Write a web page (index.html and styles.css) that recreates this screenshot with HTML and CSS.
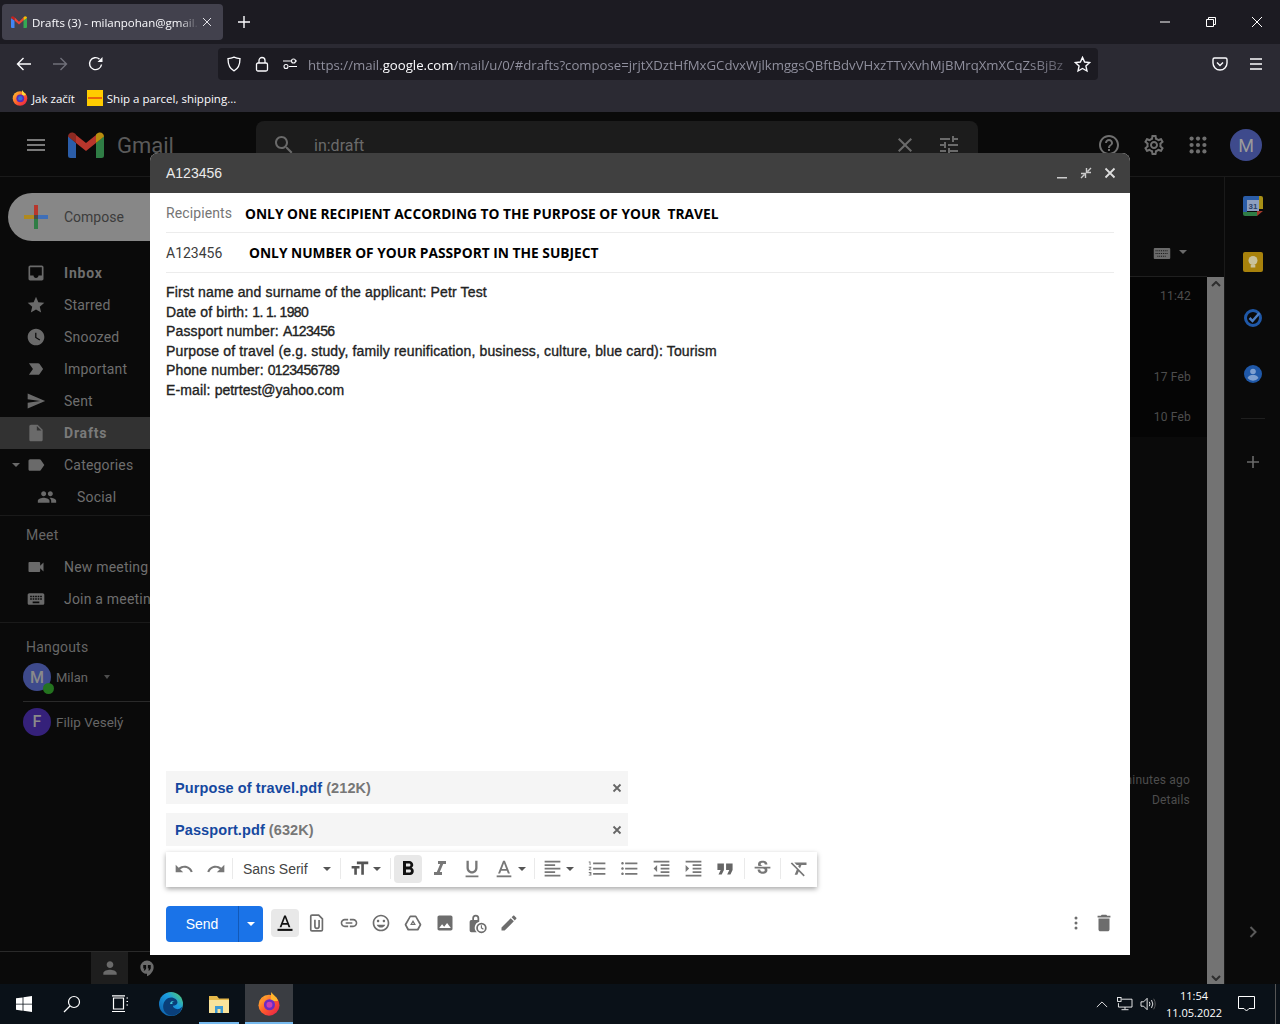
FILE: index.html
```html
<!DOCTYPE html>
<html lang="en">
<head>
<meta charset="utf-8">
<title>Drafts (3)</title>
<link rel="stylesheet" href="styles.css">
</head>
<body>
<div class="screen">
  <header class="browser">
    <div class="tabbar">
      <div class="tab">
        <svg class="favicon" viewBox="0 0 16 12"><path fill="#4285f4" d="M0 2v9a1 1 0 0 0 1 1h2.500V4.500z"/><path fill="#34a853" d="M16 2v9a1 1 0 0 1-1 1h-2.500V4.500z"/><path fill="#ea4335" d="M3.500 1.200 8 5.800l4.500-4.600v3.300L8 8.500 3.500 4.500z"/><path fill="#c5221f" d="M0 2c0-1.700 2-2.500 3.500-.8v3.300z"/><path fill="#fbbc04" d="M16 2c0-1.700-2-2.500-3.500-.8v3.300z"/></svg>
        <span class="tab-title">Drafts (3) - milanpohan@gmail.</span>
        <svg class="tab-x" viewBox="0 0 10 10"><path d="M1 1l8 8M9 1l-8 8"/></svg>
      </div>
      <svg class="newtab" viewBox="0 0 12 12"><path d="M6 0v12M0 6h12"/></svg>
      <div class="winctl">
        <svg class="wc" viewBox="0 0 46 22"><path d="M18 11h10"/></svg>
        <svg class="wc" viewBox="0 0 46 22"><path d="M18.500 8.500h7v7h-7zM20.500 8.500v-2h7v7h-2"/></svg>
        <svg class="wc" viewBox="0 0 46 22"><path d="M18 6l10 10M28 6L18 16"/></svg>
      </div>
    </div>
    <div class="navbar">
      <svg class="nav-ic ic-back" viewBox="0 0 16 16"><path d="M15 8H1.500M7.500 2L1.500 8l6 6"/></svg>
      <svg class="nav-ic ic-fwd" viewBox="0 0 16 16"><path d="M1 8h13.500M8.500 2l6 6-6 6"/></svg>
      <svg class="nav-ic ic-reload" viewBox="0 0 16 16"><path d="M13.500 8.500A6 6 0 1 1 11.500 3.100"/><path class="solid" d="M14.500 1v5h-5z"/></svg>
      <div class="urlbar">
        <svg class="url-ic" viewBox="0 0 16 16"><path d="M8 1.200c2 1 4 1.400 6 1.400 0 6-2 10.500-6 12.200C4 13.100 2 8.600 2 2.600c2 0 4-.4 6-1.400z"/></svg>
        <svg class="url-ic" viewBox="0 0 16 16"><rect x="2.500" y="7" width="11" height="8" rx="1.500"/><path d="M5 7V4.500a3 3 0 0 1 6 0V7"/></svg>
        <svg class="url-ic url-perm" viewBox="0 0 16 16"><circle cx="4" cy="10.500" r="2"/><circle cx="11.500" cy="5" r="2"/><path d="M1 5h8M14 5h1M7 10.500h8"/></svg>
        <div class="url-text">https://mail.<b>google.com</b>/mail/u/0/#drafts?compose=jrjtXDztHfMxGCdvxWjlkmggsQBftBdvVHxzTTvXvhMjBMrqXmXCqZsBjBz</div>
        <svg class="url-star" viewBox="0 0 16 16"><path d="M8 1.300l2 4.400 4.700.5-3.500 3.200 1 4.700L8 11.700l-4.200 2.400 1-4.700L1.300 6.200 6 5.700z"/></svg>
      </div>
      <svg class="nav-ic ic-pocket" viewBox="0 0 16 16"><path d="M2.500 2h11A1.500 1.500 0 0 1 15 3.500V7a7 7 0 0 1-14 0V3.500A1.500 1.500 0 0 1 2.500 2z"/><path d="M5 6.500l3 3 3-3"/></svg>
      <svg class="nav-ic ic-menu" viewBox="0 0 16 16"><path d="M2 3h12M2 8h12M2 13h12"/></svg>
    </div>
    <div class="bookmarks">
      <div class="bm">
        <svg class="bm-ic" viewBox="0 0 16 16"><defs><linearGradient id="fx1" x1="0" y1="0" x2="1" y2="1"><stop offset="0" stop-color="#ffcb2d"/><stop offset=".55" stop-color="#ff5a2c"/><stop offset="1" stop-color="#e3174e"/></linearGradient></defs><circle cx="8" cy="8.500" r="7.300" fill="url(#fx1)"/><path fill="#ffdd33" d="M10 0c1 2 3 3 4 5l-4 1z"/><circle cx="8.300" cy="8.300" r="3.900" fill="#5b2bb5"/><circle cx="8.300" cy="8.300" r="2.200" fill="#2f6fd8"/></svg>
        <span>Jak začít</span>
      </div>
      <div class="bm">
        <svg class="bm-ic" viewBox="0 0 16 16"><rect width="16" height="16" fill="#ffcc00"/><path fill="#d40511" d="M1 7.500h14v1H1z"/></svg>
        <span>Ship a parcel, shipping...</span>
      </div>
    </div>
  </header>

  <div class="gmail">
    <div class="g-head">
      <svg class="g-burger" viewBox="0 0 18 12"><path d="M0 0h18v2H0zM0 5h18v2H0zM0 10h18v2H0z"/></svg>
      <svg class="g-logo" viewBox="0 0 36 26"><path fill="#2b5da8" d="M0 4v19.500A2.500 2.500 0 0 0 2.500 26H8V11z"/><path fill="#2f7d45" d="M36 4v19.500a2.500 2.500 0 0 1-2.500 2.500H28V11z"/><path fill="#b8362c" d="M8 3l10 8 10-8v8L18 19 8 11z"/><path fill="#8d2a22" d="M0 4.500C0 .8 4.500-1.400 8 2.500V11z"/><path fill="#b98d0e" d="M36 4.500c0-3.700-4.500-5.900-8-2V11z"/></svg>
      <span class="g-word">Gmail</span>
      <div class="g-search">
        <svg class="g-sic g-mag" viewBox="0 0 24 24"><path d="M15.500 14h-.79l-.28-.27C15.410 12.590 16 11.110 16 9.500 16 5.910 13.090 3 9.500 3S3 5.910 3 9.500 5.910 16 9.500 16c1.610 0 3.090-.59 4.230-1.570l.27.28v.79l5 4.990L20.490 19l-4.990-5zm-6 0C7.010 14 5 11.990 5 9.500S7.010 5 9.500 5 14 7.010 14 9.500 11.990 14 9.500 14z"/></svg>
        <span class="g-q">in:draft</span>
        <svg class="g-sic g-clear" viewBox="0 0 24 24"><path d="M19 6.410L17.590 5 12 10.590 6.410 5 5 6.410 10.590 12 5 17.590 6.410 19 12 13.410 17.590 19 19 17.590 13.410 12z"/></svg>
        <svg class="g-sic" viewBox="0 0 24 24"><path d="M3 17v2h6v-2H3zM3 5v2h10V5H3zm10 16v-2h8v-2h-8v-2h-2v6h2zM7 9v2H3v2h4v2h2V9H7zm14 4v-2H11v2h10zm-6-4h2V7h4V5h-4V3h-2v6z"/></svg>
      </div>
      <div class="g-right">
        <svg class="g-ric" viewBox="0 0 24 24"><path d="M11 18h2v-2h-2v2zm1-16C6.480 2 2 6.480 2 12s4.480 10 10 10 10-4.480 10-10S17.520 2 12 2zm0 18c-4.410 0-8-3.590-8-8s3.590-8 8-8 8 3.590 8 8-3.590 8-8 8zm0-14c-2.210 0-4 1.790-4 4h2c0-1.100.9-2 2-2s2 .9 2 2c0 2-3 1.750-3 5h2c0-2.250 3-2.500 3-5 0-2.210-1.790-4-4-4z"/></svg>
        <svg class="g-ric g-gear" viewBox="0 0 24 24"><path d="M19.430 12.980c.04-.32.07-.64.07-.98 0-.34-.03-.66-.07-.98l2.110-1.650c.19-.15.24-.42.12-.64l-2-3.460c-.09-.16-.26-.25-.44-.25-.06 0-.12.01-.17.03l-2.490 1c-.52-.4-1.080-.73-1.690-.98l-.38-2.650C14.460 2.180 14.250 2 14 2h-4c-.25 0-.46.18-.49.42l-.38 2.650c-.61.25-1.170.59-1.690.98l-2.490-1c-.06-.02-.12-.03-.18-.03-.17 0-.34.09-.43.25l-2 3.460c-.13.22-.07.49.12.64l2.110 1.650c-.04.32-.07.65-.07.98 0 .33.03.66.07.98l-2.110 1.650c-.19.15-.24.42-.12.64l2 3.460c.09.16.26.25.44.25.06 0 .12-.01.17-.03l2.490-1c.52.4 1.080.73 1.690.98l.38 2.650c.03.24.24.42.49.42h4c.25 0 .46-.18.49-.42l.38-2.650c.61-.25 1.170-.59 1.690-.98l2.490 1c.06.02.12.03.18.03.17 0 .34-.09.43-.25l2-3.460c.12-.22.07-.49-.12-.64l-2.110-1.650zm-1.980-1.710c.04.31.05.52.05.73 0 .21-.02.43-.05.73l-.14 1.130.89.7 1.080.84-.7 1.210-1.270-.51-1.040-.42-.9.68c-.43.32-.84.56-1.250.73l-1.060.43-.16 1.130-.2 1.350h-1.400l-.19-1.350-.16-1.130-1.060-.43c-.43-.18-.83-.41-1.230-.71l-.91-.7-1.060.43-1.270.51-.7-1.210 1.080-.84.89-.7-.14-1.130c-.03-.31-.05-.54-.05-.74s.02-.43.05-.73l.14-1.130-.89-.7-1.080-.84.7-1.210 1.270.51 1.040.42.9-.68c.43-.32.84-.56 1.250-.73l1.060-.43.16-1.130.2-1.350h1.390l.19 1.350.16 1.130 1.060.43c.43.18.83.41 1.230.71l.91.7 1.060-.43 1.270-.51.7 1.210-1.070.85-.89.7.14 1.130zM12 8c-2.210 0-4 1.790-4 4s1.790 4 4 4 4-1.790 4-4-1.790-4-4-4zm0 6c-1.100 0-2-.9-2-2s.9-2 2-2 2 .9 2 2-.9 2-2 2z"/></svg>
        <svg class="g-ric g-apps" viewBox="0 0 24 24"><circle cx="5" cy="5" r="2.300"/><circle cx="12" cy="5" r="2.300"/><circle cx="19" cy="5" r="2.300"/><circle cx="5" cy="12" r="2.300"/><circle cx="12" cy="12" r="2.300"/><circle cx="19" cy="12" r="2.300"/><circle cx="5" cy="19" r="2.300"/><circle cx="12" cy="19" r="2.300"/><circle cx="19" cy="19" r="2.300"/></svg>
        <div class="g-avatar">M</div>
      </div>
    </div>
    <div class="g-body">
      <nav class="side">
        <div class="compose-btn">
          <svg class="plus" viewBox="0 0 24 24"><path fill="#2f7d45" d="M10 14h4v10h-4z"/><path fill="#b8362c" d="M10 0h4v10h-4z"/><path fill="#b08a1e" d="M0 10h10v4H0z"/><path fill="#3f6fb8" d="M14 10h10v4H14z"/><path fill="#4a4a4a" d="M10 10h4v4h-4z"/></svg>
          <span>Compose</span>
        </div>
        <ul class="menu">
          <li class="mi strong"><svg class="mi-ic" viewBox="0 0 24 24"><path d="M19 3H5c-1.100 0-2 .9-2 2v14c0 1.100.9 2 2 2h14c1.100 0 2-.9 2-2V5c0-1.100-.9-2-2-2zm0 12h-4c0 1.660-1.340 3-3 3s-3-1.340-3-3H4.990V5H19v10z"/></svg>Inbox</li>
          <li class="mi"><svg class="mi-ic" viewBox="0 0 24 24"><path d="M12 17.270L18.180 21l-1.640-7.030L22 9.240l-7.190-.61L12 2 9.190 8.630 2 9.240l5.460 4.730L5.820 21z"/></svg>Starred</li>
          <li class="mi"><svg class="mi-ic" viewBox="0 0 24 24"><path d="M12 2C6.500 2 2 6.500 2 12s4.500 10 10 10 10-4.500 10-10S17.500 2 12 2zm4.200 14.200L11 13V7h1.500v5.200l4.500 2.700-.8 1.300z"/></svg>Snoozed</li>
          <li class="mi"><svg class="mi-ic" viewBox="0 0 24 24"><path d="M3.500 18.990l11 .01c.67 0 1.270-.33 1.630-.84L20.500 12l-4.370-6.160c-.36-.51-.96-.84-1.630-.84l-11 .01L8.340 12 3.500 18.990z"/></svg>Important</li>
          <li class="mi"><svg class="mi-ic" viewBox="0 0 24 24"><path d="M2.010 21L23 12 2.010 3 2 10l15 2-15 2z"/></svg>Sent</li>
          <li class="mi strong active"><svg class="mi-ic" viewBox="0 0 24 24"><path d="M6 2c-1.100 0-1.990.9-1.990 2L4 20c0 1.100.89 2 1.990 2H18c1.100 0 2-.9 2-2V8l-6-6H6zm7 7V3.500L18.500 9H13z"/></svg>Drafts</li>
          <li class="mi"><span class="caret"></span><svg class="mi-ic" viewBox="0 0 24 24"><path d="M17.630 5.840C17.270 5.330 16.670 5 16 5L5 5.010C3.900 5.010 3 5.900 3 7v10c0 1.100.9 1.990 2 1.990L16 19c.67 0 1.270-.33 1.630-.84L22 12l-4.370-6.160z"/></svg>Categories</li>
          <li class="mi sub"><svg class="mi-ic" viewBox="0 0 24 24"><path d="M16 11c1.660 0 2.990-1.340 2.990-3S17.660 5 16 5c-1.660 0-3 1.340-3 3s1.340 3 3 3zm-8 0c1.660 0 2.990-1.340 2.990-3S9.660 5 8 5C6.340 5 5 6.340 5 8s1.340 3 3 3zm0 2c-2.330 0-7 1.170-7 3.500V19h14v-2.500c0-2.330-4.670-3.500-7-3.500zm8 0c-.29 0-.62.02-.97.05 1.160.84 1.970 1.970 1.970 3.450V19h6v-2.500c0-2.330-4.670-3.500-7-3.500z"/></svg>Social</li>
        </ul>
        <div class="sec">
          <div class="sec-title">Meet</div>
          <div class="mi"><svg class="mi-ic" viewBox="0 0 24 24"><path d="M17 10.500V7c0-.55-.45-1-1-1H4c-.55 0-1 .45-1 1v10c0 .55.45 1 1 1h12c.55 0 1-.45 1-1v-3.500l4 4v-11l-4 4z"/></svg>New meeting</div>
          <div class="mi"><svg class="mi-ic" viewBox="0 0 24 24"><path d="M20 5H4c-1.100 0-1.990.9-1.990 2L2 17c0 1.100.9 2 2 2h16c1.100 0 2-.9 2-2V7c0-1.100-.9-2-2-2zm-9 3h2v2h-2V8zm0 3h2v2h-2v-2zM8 8h2v2H8V8zm0 3h2v2H8v-2zm-1 2H5v-2h2v2zm0-3H5V8h2v2zm9 7H8v-2h8v2zm0-4h-2v-2h2v2zm0-3h-2V8h2v2zm3 3h-2v-2h2v2zm0-3h-2V8h2v2z"/></svg>Join a meeting</div>
        </div>
        <div class="sec hang">
          <div class="sec-title">Hangouts</div>
          <div class="person me"><span class="pav pav-m">M<i class="dot"></i></span>Milan<span class="caret small"></span></div>
          <div class="person other"><span class="pav pav-f">F</span>Filip Veselý</div>
        </div>
        <div class="side-foot">
          <span class="foot-btn on"><svg viewBox="0 0 24 24"><path d="M12 12c2.210 0 4-1.790 4-4s-1.790-4-4-4-4 1.790-4 4 1.790 4 4 4zm0 2c-2.670 0-8 1.340-8 4v2h16v-2c0-2.660-5.330-4-8-4z"/></svg></span>
          <span class="foot-btn"><svg viewBox="0 0 24 24"><path d="M12 3a8 8 0 0 0-8 8c0 4.400 3.600 8 8 8v3c4-1.900 8-6 8-11a8 8 0 0 0-8-8zm-1 9.500L9.500 15H8l1-2.500H7.500V8.500H11zm5.500 0L15 15h-1.500l1-2.500H13V8.500h3.500z"/></svg></span>
        </div>
      </nav>
      <main class="main">
        <div class="main-scroll">
          <div class="list-tools">
            <svg class="kb" viewBox="0 0 18 12"><rect width="18" height="12" rx="1"/><path d="M2 3h14M2 6h14M4 9h10" stroke="#0a0a0a" stroke-dasharray="1 1"/></svg>
            <span class="caret kbc"></span>
          </div>
          <div class="row row-tall"><span>11:42</span></div>
          <div class="row"><span>17 Feb</span></div>
          <div class="row"><span>10 Feb</span></div>
          <div class="activity">
            <div>Last account activity: 12 minutes ago</div>
            <div>Details</div>
          </div>
        </div>
        <div class="scrollbar">
          <svg viewBox="0 0 10 6"><path d="M1 5l4-4 4 4"/></svg>
          <svg viewBox="0 0 10 6"><path d="M1 1l4 4 4-4"/></svg>
        </div>
      </main>
      <aside class="addons">
        <svg class="ad" viewBox="0 0 20 20"><path fill="#2b5da8" d="M2 0h14v4H4v12H0V2a2 2 0 0 1 2-2z"/><path fill="#a89016" d="M16 0h2a2 2 0 0 1 2 2v11h-4z"/><path fill="#2f7d45" d="M0 16h14v4H2a2 2 0 0 1-2-2z"/><path fill="#a33a2c" d="M14 15h6l-6 5z"/><rect x="4" y="4" width="12" height="11" fill="#8e9fbf"/><text x="10" y="13" class="ad-31">31</text></svg>
        <svg class="ad" viewBox="0 0 20 20"><rect width="20" height="20" rx="2" fill="#a8820c"/><circle cx="10" cy="8.500" r="4.500" fill="#c9c29c"/><rect x="7.700" y="13" width="4.600" height="2.500" fill="#c9c29c"/></svg>
        <svg class="ad" viewBox="0 0 20 20"><circle cx="10" cy="10" r="7.500" fill="none" stroke="#1f58a8" stroke-width="3"/><path d="M6.500 10l3 3 7-8" fill="none" stroke="#4a7cc2" stroke-width="2.500"/></svg>
        <svg class="ad" viewBox="0 0 20 20"><circle cx="10" cy="10" r="9" fill="#1f58a8"/><circle cx="10" cy="7.500" r="2.800" fill="#7fa0d0"/><path fill="#7fa0d0" d="M4.500 14c1-2.500 3.500-3 5.500-3s4.500.5 5.500 3a7 7 0 0 1-11 0z"/></svg>
        <span class="ad-line"></span>
        <svg class="ad-plus" viewBox="0 0 12 12"><path d="M5.200 0h1.600v12H5.200zM0 5.200h12v1.600H0z"/></svg>
        <svg class="ad-chev" viewBox="0 0 8 12"><path d="M1.500 1l5 5-5 5"/></svg>
      </aside>
    </div>

    <section class="composer">
      <header class="c-head">
        <span class="c-title">A123456</span>
        <svg class="c-ic" viewBox="0 0 12 12"><path d="M1 10h10v1.600H1z"/></svg>
        <svg class="c-ic" viewBox="0 0 12 12"><path d="M11 1L7.500 4.500M6.500 1v4.500H11M1 11l3.500-3.500M5.500 11V6.500H1" fill="none" stroke="#ccc" stroke-width="1.400"/></svg>
        <svg class="c-ic" viewBox="0 0 12 12"><path d="M1.500 1.500l9 9M10.500 1.500l-9 9" fill="none" stroke="#ddd" stroke-width="1.800"/></svg>
      </header>
      <div class="c-main">
        <div class="field"><span class="f-label">Recipients</span><b class="f-note note-a">ONLY ONE RECIPIENT ACCORDING TO THE PURPOSE OF YOUR&nbsp; TRAVEL</b></div>
        <div class="field"><span class="f-subject">A123456</span><b class="f-note">ONLY NUMBER OF YOUR PASSPORT IN THE SUBJECT</b></div>
        <div class="c-text">
          <div>First name and surname of the applicant: Petr Test</div>
          <div>Date of birth: <span class="num">1. 1. 1980</span></div>
          <div>Passport number: <span class="num">A123456</span></div>
          <div>Purpose of travel (e.g. study, family reunification, business, culture, blue card): Tourism</div>
          <div>Phone number: <span class="num">0123456789</span></div>
          <div>E-mail: <span class="mail">petrtest@yahoo.com</span></div>
        </div>
        <div class="att"><span class="att-name">Purpose of travel.pdf</span><span class="att-size">(212K)</span><svg class="att-x" viewBox="0 0 10 10"><path d="M1.500 1.500l7 7M8.500 1.500l-7 7"/></svg></div>
        <div class="att"><span class="att-name">Passport.pdf</span><span class="att-size">(632K)</span><svg class="att-x" viewBox="0 0 10 10"><path d="M1.500 1.500l7 7M8.500 1.500l-7 7"/></svg></div>
        <div class="fmt">
          <span class="fb"><svg viewBox="0 0 24 24"><path d="M12.500 8c-2.650 0-5.050.99-6.900 2.600L2 7v9h9l-3.620-3.620c1.390-1.160 3.160-1.880 5.120-1.880 3.540 0 6.550 2.310 7.600 5.500l2.370-.78C21.080 11.030 17.150 8 12.500 8z"/></svg></span>
          <span class="fb"><svg viewBox="0 0 24 24"><path d="M18.400 10.600C16.550 8.990 14.150 8 11.500 8c-4.650 0-8.580 3.030-9.960 7.220L3.900 16c1.050-3.190 4.050-5.500 7.600-5.500 1.950 0 3.730.72 5.120 1.880L13 16h9V7l-3.600 3.600z"/></svg></span>
          <span class="sep"></span>
          <span class="font-pick">Sans Serif<span class="caret dark"></span></span>
          <span class="sep"></span>
          <span class="fb wide w-tt"><svg class="dk" viewBox="0 0 24 24"><path d="M9 4v3h5v12h3V7h5V4H9zm-6 8h3v7h3v-7h3V9H3v3z"/></svg><span class="caret dark"></span></span>
          <span class="sep"></span>
          <span class="fb on big"><svg class="blk" viewBox="0 0 24 24"><path d="M15.600 10.790c.97-.67 1.650-1.770 1.650-2.790 0-2.260-1.750-4-4-4H7v14h7.040c2.090 0 3.710-1.700 3.710-3.790 0-1.520-.86-2.820-2.150-3.420zM10 6.500h3c.83 0 1.500.67 1.500 1.500s-.67 1.500-1.500 1.500h-3v-3zm3.500 9H10v-3h3.500c.83 0 1.500.67 1.500 1.500s-.67 1.500-1.500 1.500z"/></svg></span>
          <span class="fb big"><svg viewBox="0 0 24 24"><path d="M10 4v3h2.210l-3.420 8H6v3h8v-3h-2.210l3.420-8H18V4z"/></svg></span>
          <span class="fb uline"><svg viewBox="0 0 24 24"><path d="M12 17c3.310 0 6-2.690 6-6V3h-2.500v8c0 1.930-1.570 3.500-3.500 3.500S8.500 12.930 8.500 11V3H6v8c0 3.310 2.690 6 6 6zm-7 2v2h14v-2H5z"/></svg></span>
          <span class="fb wide w-a"><svg viewBox="0 0 24 24"><path d="M11 3L5.500 17h2.250l1.120-3h6.250l1.120 3h2.250L13 3h-2zm-1.380 9L12 5.670 14.380 12H9.620z"/><path d="M4 19h16v2H4z"/></svg><span class="caret dark"></span></span>
          <span class="sep"></span>
          <span class="fb wide w-al"><svg viewBox="0 0 24 24"><path d="M15 15H3v2h12v-2zm0-8H3v2h12V7zM3 13h18v-2H3v2zm0 8h18v-2H3v2zM3 3v2h18V3H3z"/></svg><span class="caret dark"></span></span>
          <span class="fb mid"><svg viewBox="0 0 24 24"><path d="M2 17h2v.5H3v1h1v.5H2v1h3v-4H2v1zm1-9h1V4H2v1h1v3zm-1 3h1.800L2 13.100v.9h3v-1H3.200L5 10.900V10H2v1zm5-6v2h14V5H7zm0 14h14v-2H7v2zm0-6h14v-2H7v2z"/></svg></span>
          <span class="fb mid"><svg viewBox="0 0 24 24"><path d="M4 10.500c-.83 0-1.500.67-1.500 1.500s.67 1.500 1.500 1.500 1.500-.67 1.500-1.500-.67-1.500-1.500-1.500zm0-6c-.83 0-1.500.67-1.500 1.500S3.170 7.500 4 7.500 5.500 6.830 5.500 6 4.830 4.500 4 4.500zm0 12c-.83 0-1.500.68-1.500 1.500s.68 1.500 1.500 1.500 1.500-.68 1.500-1.500-.67-1.500-1.500-1.500zM7 19h14v-2H7v2zm0-6h14v-2H7v2zm0-8v2h14V5H7z"/></svg></span>
          <span class="fb mid"><svg viewBox="0 0 24 24"><path d="M11 17h10v-2H11v2zm-8-5l4 4V8l-4 4zm0 9h18v-2H3v2zM3 3v2h18V3H3zm8 6h10V7H11v2zm0 4h10v-2H11v2z"/></svg></span>
          <span class="fb mid"><svg viewBox="0 0 24 24"><path d="M3 21h18v-2H3v2zM3 8v8l4-4-4-4zm8 9h10v-2H11v2zM3 3v2h18V3H3zm8 6h10V7H11v2zm0 4h10v-2H11v2z"/></svg></span>
          <span class="fb quote"><svg viewBox="0 0 24 24"><path d="M6 17h3l2-4V7H5v6h3zm8 0h3l2-4V7h-6v6h3z"/></svg></span>
          <span class="sep s3"></span>
          <span class="fb mid"><svg viewBox="0 0 24 24"><path d="M7.240 8.750c-.26-.48-.39-1.030-.39-1.670 0-.61.13-1.160.4-1.670.26-.5.63-.93 1.110-1.290.48-.35 1.050-.63 1.700-.83.66-.19 1.390-.29 2.180-.29.81 0 1.540.11 2.210.34.66.22 1.230.54 1.690.94.47.4.83.88 1.080 1.430.25.55.38 1.150.38 1.810h-3.010c0-.31-.05-.59-.15-.85-.09-.27-.24-.49-.44-.68-.2-.19-.45-.33-.75-.44-.3-.1-.66-.16-1.060-.16-.39 0-.74.04-1.030.13-.29.09-.53.21-.72.36-.19.16-.34.34-.44.55-.1.21-.15.43-.15.66 0 .48.25.88.74 1.210.38.25.77.48 1.410.7H7.390c-.05-.08-.11-.17-.15-.25zM21 12v-2H3v2h9.620c.18.07.4.14.55.2.37.17.66.34.87.51.21.17.35.36.43.57.07.2.11.43.11.69 0 .23-.05.45-.14.66-.09.2-.23.38-.42.53-.19.15-.42.26-.71.35-.29.08-.63.13-1.010.13-.43 0-.83-.04-1.180-.13s-.66-.23-.91-.42c-.25-.19-.45-.44-.59-.75-.14-.31-.25-.76-.25-1.210H6.400c0 .55.08 1.130.24 1.580.16.45.37.85.65 1.210.28.35.6.66.98.92.37.26.78.48 1.220.65.44.17.9.3 1.380.39.48.08.96.13 1.440.13.8 0 1.530-.09 2.180-.28s1.210-.45 1.670-.79c.46-.34.82-.77 1.070-1.270s.38-1.070.38-1.710c0-.6-.1-1.140-.31-1.610-.05-.11-.11-.23-.17-.33H21z"/></svg></span>
          <span class="sep s4"></span>
          <span class="fb mid"><svg viewBox="0 0 24 24"><path d="M3.270 5L2 6.270l6.970 6.970L6.500 19h3l1.570-3.660L16.730 21 18 19.730 3.550 5.270 3.270 5zM6 5v.18L8.820 8h2.400l-.72 1.680 2.100 2.100L14.210 8H20V5H6z"/></svg></span>
        </div>
        <div class="c-actions">
          <div class="send"><span class="send-main">Send</span><span class="send-more"><span class="caret white"></span></span></div>
          <span class="ab on"><svg class="blk" viewBox="0 0 24 24"><path d="M11 3L5.500 17h2.250l1.120-3h6.250l1.120 3h2.250L13 3h-2zm-1.380 9L12 5.670 14.380 12H9.620z"/><path d="M3 19h18v2.500H3z"/></svg></span>
          <span class="ab"><svg class="outline" viewBox="0 0 24 24"><path d="M6 2.500h8l4.500 4.500v13a1.500 1.500 0 0 1-1.500 1.500H6A1.500 1.500 0 0 1 4.500 20V4A1.500 1.500 0 0 1 6 2.500z"/><path d="M9.500 8v8a2.500 2.500 0 0 0 5 0V8.500"/></svg></span>
          <span class="ab"><svg viewBox="0 0 24 24"><path d="M3.900 12c0-1.710 1.390-3.100 3.100-3.100h4V7H7c-2.760 0-5 2.240-5 5s2.240 5 5 5h4v-1.900H7c-1.710 0-3.100-1.390-3.100-3.100zM8 13h8v-2H8v2zm9-6h-4v1.900h4c1.710 0 3.100 1.390 3.100 3.100s-1.390 3.100-3.100 3.100h-4V17h4c2.760 0 5-2.240 5-5s-2.240-5-5-5z"/></svg></span>
          <span class="ab"><svg viewBox="0 0 24 24"><path d="M11.990 2C6.470 2 2 6.480 2 12s4.470 10 9.990 10C17.520 22 22 17.520 22 12S17.520 2 11.990 2zM12 20c-4.420 0-8-3.580-8-8s3.580-8 8-8 8 3.580 8 8-3.580 8-8 8zm3.500-9c.83 0 1.500-.67 1.500-1.500S16.330 8 15.500 8 14 8.670 14 9.500s.67 1.500 1.500 1.500zm-7 0c.83 0 1.500-.67 1.500-1.500S9.330 8 8.500 8 7 8.670 7 9.500 7.670 11 8.500 11zm3.500 6.500c2.330 0 4.310-1.460 5.110-3.500H6.890c.8 2.040 2.780 3.500 5.110 3.500z"/></svg></span>
          <span class="ab"><svg viewBox="0 0 24 24"><path fill-rule="evenodd" d="M9 3h6a1.500 1.500 0 0 1 1.300.75l5.500 9.500a1.500 1.500 0 0 1 0 1.500l-3 5.500A1.500 1.500 0 0 1 17.500 21h-11a1.500 1.500 0 0 1-1.300-.75l-3-5.500a1.500 1.500 0 0 1 0-1.500l5.500-9.500A1.500 1.500 0 0 1 9 3zm.2 2L4.200 14l2.800 5h10l2.800-5-5-9zM12 8.500l3.500 6h-7zm0 3.200l-1.400 1.300h2.800z"/></svg></span>
          <span class="ab"><svg viewBox="0 0 24 24"><path d="M21 19V5c0-1.100-.9-2-2-2H5c-1.100 0-2 .9-2 2v14c0 1.100.9 2 2 2h14c1.100 0 2-.9 2-2zM8.500 13.500l2.500 3.010L14.500 12l4.500 6H5l3.500-4.500z"/></svg></span>
          <span class="ab ab-lock"><svg viewBox="0 0 24 24"><path d="M10 2a4 4 0 0 0-4 4v2H5a2 2 0 0 0-2 2v10a2 2 0 0 0 2 2h6.200A7 7 0 0 1 14 10V6a4 4 0 0 0-4-4zm2 6H8V6a2 2 0 0 1 4 0z"/><path fill-rule="evenodd" d="M16.500 11a6 6 0 1 0 0 12 6 6 0 0 0 0-12zm0 2a4 4 0 1 1 0 8 4 4 0 0 1 0-8zm-.7 1v3.400l2.600 1.600.7-1.100-2-1.200V14z"/></svg></span>
          <span class="ab"><svg viewBox="0 0 24 24"><path d="M3 17.250V21h3.750L17.810 9.940l-3.750-3.750L3 17.250zM20.710 7.040c.39-.39.39-1.020 0-1.410l-2.340-2.340c-.39-.39-1.020-.39-1.410 0l-1.830 1.830 3.750 3.750 1.830-1.830z"/></svg></span>
          <span class="spacer"></span>
          <span class="ab ab-more"><svg viewBox="0 0 24 24"><circle cx="12" cy="6" r="1.800"/><circle cx="12" cy="12" r="1.800"/><circle cx="12" cy="18" r="1.800"/></svg></span>
          <span class="ab ab-trash"><svg viewBox="0 0 24 24"><path d="M6 19c0 1.100.9 2 2 2h8c1.100 0 2-.9 2-2V7H6v12zM19 4h-3.500l-1-1h-5l-1 1H5v2h14V4z"/></svg></span>
        </div>
      </div>
    </section>
  </div>

  <footer class="taskbar">
    <span class="tb"><svg class="t-win" viewBox="0 0 16 16"><path d="M0 2.300l6.600-.9v6.300H0zM7.400 1.300L16 0v7.700H7.400zM0 8.400h6.600v6.300L0 13.800zM7.400 8.400H16V16l-8.600-1.200z"/></svg></span>
    <span class="tb"><svg class="t-line" viewBox="0 0 18 18"><circle cx="11" cy="7" r="5.500"/><path d="M7 11l-6 6"/></svg></span>
    <span class="tb"><svg class="t-line" viewBox="0 0 18 18"><path d="M2.500 3h10v11h-10zM1 .8h13M1 16.500h13M15.500 3h1.500M15.500 6.500h1.500M15.500 10h1.500"/></svg></span>
    <span class="tb tb-edge"><svg class="t-app" viewBox="0 0 26 26"><defs><linearGradient id="ed" x1="0" y1="1" x2="1" y2="0"><stop offset="0" stop-color="#0c59a4"/><stop offset=".6" stop-color="#1b9de2"/><stop offset="1" stop-color="#5dd45d"/></linearGradient></defs><circle cx="13" cy="13" r="13" fill="url(#ed)"/><path fill="#0a3f7a" d="M16 25.500C9 27 4 21 4.500 15 5 9.500 9 6 13 6c4 0 7 2.500 7 5.500 0 2-2 3.500-5 3.500 0 2 3 4 6 3.500 1.500-.3 3.500-1.500 4.300-3-.8 5-4.300 9-9.300 10z"/><path fill="#3fc8d8" d="M12 13c0-3 3-4 5-3-3 0-3 2-2 3z"/></svg></span>
    <span class="tb run"><svg class="t-app" viewBox="0 0 24 24"><path fill="#e5b84a" d="M2 4h8l2 2.500h10V21H2z"/><path fill="#f9e39b" d="M2 8h20v13H2z"/><path fill="#3f9bd4" d="M8 14h8v7h-2.500v-4h-3v4H8z"/></svg></span>
    <span class="tb run active"><svg class="t-app" viewBox="0 0 16 16"><defs><linearGradient id="fx2" x1="0" y1="0" x2="1" y2="1"><stop offset="0" stop-color="#ffcb2d"/><stop offset=".5" stop-color="#ff5a2c"/><stop offset="1" stop-color="#e3174e"/></linearGradient></defs><circle cx="8" cy="8.800" r="7" fill="url(#fx2)"/><path fill="#ffb52d" d="M9.500 0c1 2 4 3 4.500 6L9 6z"/><path fill="#ff8f2d" d="M1.500 6l3-3c0 1 .5 1.500 1 2z"/><circle cx="8.300" cy="8.500" r="3.700" fill="#6a2cc4"/><circle cx="8.300" cy="8.500" r="2" fill="#c93fb3"/></svg></span>
    <span class="spacer"></span>
    <svg class="tray tr-up" viewBox="0 0 14 8"><path d="M1 7l6-6 6 6"/></svg>
    <svg class="tray tr-net" viewBox="0 0 18 16"><path d="M5 2.500h12v9H1.500V7M9 11.500V14M5 14.500h8"/><rect x=".5" y=".5" width="4" height="4.500"/></svg>
    <svg class="tray tr-snd" viewBox="0 0 18 16"><path d="M1 5.500h3l4-4v13l-4-4H1zM10.500 5.500q1.500 2.500 0 5M13 3.500q3 4.500 0 9"/><path class="dim" d="M15.500 2q3.500 6 0 12"/></svg>
    <div class="clock"><div>11:54</div><div>11.05.2022</div></div>
    <svg class="tray tr-note" viewBox="0 0 17 16"><path d="M.5.500h16v12H11l-2.500 2.500L6 12.500H.5z"/></svg>
    <span class="showdesk"></span>
  </footer>
</div>
</body>
</html>
```

FILE: styles.css
```css
* { box-sizing: border-box; }
html, body { margin: 0; padding: 0; }
body { width: 1280px; height: 1024px; overflow: hidden; background: #0a0a0a; font-family: "Roboto", "Liberation Sans", sans-serif; }
svg { display: block; flex: none; }
ul { list-style: none; margin: 0; padding: 0; }
.screen { display: flex; flex-direction: column; height: 1024px; }
.spacer { flex: 1; }

/* browser chrome */
.browser { flex: none; font-family: "Open Sans", "Noto Sans", sans-serif; color: #fbfbfe; }
.tabbar { height: 44px; background: #1c1b22; display: flex; align-items: center; padding: 0 0 0 2px; }
.tab { width: 221px; height: 36px; border-radius: 4px; background: #42414d; display: flex; align-items: center; padding: 0 11px 0 9px; }
.favicon { width: 16px; height: 12px; margin-right: 5px; }
.tab-title { flex: 1; font-size: 11.500px; white-space: nowrap; overflow: hidden; -webkit-mask-image: linear-gradient(to right, #000 88%, transparent); mask-image: linear-gradient(to right, #000 88%, transparent); }
.tab-x { width: 10px; height: 10px; margin-left: 3px; fill: none; stroke: #e0e0e6; stroke-width: 1; }
.newtab { width: 12px; height: 12px; margin-left: 15px; fill: none; stroke: #fbfbfe; stroke-width: 1.400; }
.winctl { margin-left: auto; display: flex; }
.wc { width: 46px; height: 22px; fill: none; stroke: #fff; stroke-width: 1; }
.navbar { height: 40px; background: #2b2a33; display: flex; align-items: center; padding-left: 16px; }
.nav-ic { width: 16px; height: 16px; fill: none; stroke: #fbfbfe; stroke-width: 1.400; }
.ic-fwd { margin-left: 20px; stroke: #70707a; }
.ic-reload { margin-left: 20px; }
.ic-reload .solid { fill: #fbfbfe; stroke: none; }
.urlbar { width: 880px; height: 32px; margin-left: 114px; background: #1c1b22; border-radius: 4px; display: flex; align-items: center; padding-left: 8px; }
.url-ic { width: 16px; height: 16px; margin-right: 12px; fill: none; stroke: #fbfbfe; stroke-width: 1.300; }
.url-perm { margin-right: 10px; stroke-width: 1.100; }
.url-text { width: 757px; margin-top: 2px; font-size: 13.200px; white-space: nowrap; color: #8f8f9d; -webkit-mask-image: linear-gradient(to right, #000 95%, #0008); mask-image: linear-gradient(to right, #000 95%, #0008); }
.url-text b { font-weight: 400; color: #fbfbfe; }
.url-star { width: 17px; height: 17px; margin-left: 9px; fill: none; stroke: #fbfbfe; stroke-width: 1.300; }
.ic-pocket { margin-left: 114px; }
.ic-menu { margin-left: 20px; }
.bookmarks { height: 28px; background: #2b2a33; display: flex; align-items: center; padding: 0 0 0 12px; font-size: 11.500px; }
.bm { display: flex; align-items: center; margin-right: 12px; }
.bm-ic { width: 16px; height: 16px; margin-right: 4px; }

/* gmail */
.gmail { flex: 1; min-height: 0; position: relative; display: flex; flex-direction: column; background: #0a0a0a; color: #6e6e6e; }
.g-head { height: 65px; flex: none; display: flex; align-items: center; border-bottom: 1px solid #1a1a1a; padding: 2px 0 0 27px; }
.g-burger { width: 18px; height: 12px; fill: #7a7a7a; }
.g-logo { width: 36px; height: 26px; margin-left: 23px; }
.g-word { width: 106px; margin-left: 13px; font-size: 22px; color: #5a5a5a; }
.g-search { width: 722px; height: 48px; margin-left: 33px; background: #1c1c1c; border-radius: 8px; display: flex; align-items: center; padding: 0 17px 0 16px; align-self: flex-start; margin-top: 7px; gap: 20px; }
.g-sic { width: 24px; height: 24px; fill: #6a6a6a; }
.g-q { flex: 1; font-size: 16px; color: #6a6a6a; margin-left: -2px; }
.g-right { display: flex; align-items: center; margin-left: 119px; gap: 20px; }
.g-ric { width: 24px; height: 24px; fill: #6f6f6f; }
.g-gear { margin-left: 1px; }
.g-apps { width: 22px; height: 22px; margin: 0 1px; }
.g-avatar { width: 32px; height: 32px; border-radius: 50%; background: #3e4a8c; color: #9a9a9a; font-size: 18px; display: flex; align-items: center; justify-content: center; }
.g-body { flex: 1; min-height: 0; display: flex; }
.side { width: 256px; flex: none; display: flex; flex-direction: column; padding-top: 16px; }
.compose-btn { width: 168px; height: 48px; margin-left: 8px; border-radius: 24px; background: #878787; display: flex; align-items: center; padding-left: 16px; color: #3c3c3c; font-size: 14px; flex: none; }
.plus { width: 24px; height: 24px; margin-right: 16px; }
.menu { margin-top: 16px; padding-bottom: 2px; border-bottom: 1px solid #1a1a1a; }
.mi { height: 32px; display: flex; align-items: center; position: relative; padding-left: 26px; font-size: 14px; color: #6e6e6e; white-space: nowrap; letter-spacing: .2px; }
.mi.strong { font-weight: 700; letter-spacing: .8px; }
.mi.active { background: #323232; border-radius: 0 16px 16px 0; color: #7a7a7a; }
.mi.sub { padding-left: 37px; }
.mi-ic { width: 20px; height: 20px; margin-right: 18px; fill: #6a6a6a; }
.mi.sub .mi-ic { margin-right: 20px; }
.caret { display: inline-block; width: 0; height: 0; border-left: 4px solid transparent; border-right: 4px solid transparent; border-top: 4px solid #6a6a6a; }
.mi .caret { position: absolute; left: 12px; top: 14px; }
.sec { flex: none; }
.sec-title { height: 32px; margin-top: 3px; padding-left: 26px; display: flex; align-items: center; font-size: 14px; color: #666; letter-spacing: .2px; }
.hang { margin-top: 7px; border-top: 1px solid #1a1a1a; padding-top: 5px; }
.person { display: flex; align-items: center; height: 32px; padding-left: 23px; font-size: 13.500px; color: #666; }
.me { height: 30px; margin-top: -1px; font-size: 13px; }
.other { height: 40px; margin-left: 23px; padding-left: 0; border-top: 1px solid #2a2a2a; margin-top: 9px; }
.pav { width: 28px; height: 28px; border-radius: 50%; display: flex; align-items: center; justify-content: center; margin-right: 5px; position: relative; color: #8a8a8a; font-size: 16px; font-weight: 500; }
.pav-m { background: #3e4a8c; }
.pav-f { background: #35217a; }
.dot { position: absolute; right: -3px; bottom: -3px; width: 11px; height: 11px; border-radius: 50%; background: #24731f; }
.caret.small { margin-left: 16px; border-left-width: 3.500px; border-right-width: 3.500px; border-top-color: #4d4d4d; }
.side-foot { margin-top: auto; height: 33px; border-top: 1px solid #2a2a2a; display: flex; padding-left: 91px; flex: none; }
.foot-btn { width: 37px; height: 32px; display: flex; align-items: center; justify-content: center; }
.foot-btn.on { background: #1e1e1e; }
.foot-btn svg { width: 20px; height: 20px; fill: #6a6a6a; }
.main { flex: 1; min-width: 0; display: flex; }
.main-scroll { flex: 1; min-width: 0; display: flex; flex-direction: column; font-size: 12px; letter-spacing: .2px; color: #4d4d4d; }
.list-tools { height: 100px; flex: none; display: flex; align-items: center; justify-content: flex-end; padding: 53px 20px 0 0; border-bottom: 1px solid #1f1f1f; }
.kb { width: 18px; height: 11px; fill: #6a6a6a; }
.kbc { margin-left: 8px; margin-top: -2px; }
.row { height: 40px; flex: none; display: flex; justify-content: flex-end; align-items: center; padding-right: 16px; background: #050505; font-size: 12px; }
.row-tall { height: 80px; align-items: flex-start; padding-top: 12px; }
.activity { margin-top: 333px; text-align: right; padding-right: 17px; line-height: 20px; }
.scrollbar { width: 17px; flex: none; background: #737373; display: flex; flex-direction: column; justify-content: space-between; align-items: center; padding: 4px 0 3px; margin-top: 100px; }
.scrollbar svg { width: 10px; height: 6px; fill: none; stroke: #2e2e2e; stroke-width: 2; }
.addons { width: 56px; flex: none; border-left: 1px solid #1a1a1a; display: flex; flex-direction: column; align-items: center; padding-top: 19px; }
.ad { width: 20px; height: 20px; margin-bottom: 36px; }
.ad-31 { font: 700 8px "Liberation Sans", sans-serif; text-anchor: middle; fill: #2b3f66; }
.ad-line { width: 24px; height: 1px; background: #1f1f1f; margin: -2px 0 37px; }
.ad-plus { width: 12px; height: 12px; fill: #6a6a6a; }
.ad-chev { width: 8px; height: 12px; fill: none; stroke: #5a5a5a; stroke-width: 2; margin-top: auto; margin-bottom: 46px; }

/* compose dialog */
.composer { position: absolute; left: 150px; top: 41px; width: 980px; height: 802px; display: flex; flex-direction: column; border-radius: 8px 8px 0 0; overflow: hidden; background: #fff; }
.c-head { height: 40px; flex: none; background: #404040; display: flex; align-items: center; padding: 0 14px 0 16px; color: #ebebeb; font-family: "Liberation Sans", Arial, sans-serif; font-size: 14px; }
.c-title { flex: 1; }
.c-ic { width: 12px; height: 12px; margin-left: 12px; fill: #ccc; }
.c-main { flex: 1; min-height: 0; display: flex; flex-direction: column; padding: 0 16px 13px; }
.field { height: 40px; flex: none; border-bottom: 1px solid #ececec; display: flex; align-items: center; font-size: 14px; color: #222; }
.f-label { color: #757575; width: 79px; letter-spacing: .1px; }
.f-subject { width: 83px; color: #3c3c3c; }
.f-note { font-family: "Open Sans", "Noto Sans", sans-serif; font-weight: 700; font-size: 13.750px; color: #000; white-space: nowrap; }
.note-a { margin-top: 1px; }
.c-text { flex: 1; min-height: 0; padding-top: 10px; font-family: "Liberation Sans", Arial, sans-serif; font-size: 14px; letter-spacing: .15px; line-height: 19.600px; color: #222; -webkit-text-stroke: .35px #222; }
.num { letter-spacing: -.65px; }
.mail { letter-spacing: 0; }
.att { height: 33px; flex: none; margin-bottom: 9px; width: 462px; background: #f5f5f5; display: flex; align-items: center; padding: 0 6px 0 9px; font-family: "Liberation Sans", Arial, sans-serif; font-size: 14.500px; font-weight: 700; letter-spacing: .1px; }
.att-name { color: #15489f; }
.att-size { margin-left: 4px; color: #777; flex: 1; }
.att-x { width: 10px; height: 10px; fill: none; stroke: #666; stroke-width: 1.800; }
.fmt { width: 651px; height: 35px; flex: none; margin-top: -3px; display: flex; align-items: center; padding: 0 0 2px 2px; background: #fff; box-shadow: 0 2px 5px rgba(0,0,0,.35); position: relative; }
.fb { width: 32px; height: 28px; flex: none; display: flex; align-items: center; justify-content: center; border-radius: 4px; }
.fb svg { width: 20px; height: 20px; fill: #777; }
.fb svg.dk { width: 21px; height: 21px; fill: #555; }
.fb svg.blk { fill: #111; }
.fb.big svg { width: 24px; height: 24px; }
.fb.uline svg { width: 22px; height: 22px; }
.fb.mid svg { width: 21px; height: 21px; }
.fb.quote svg { width: 26px; height: 26px; fill: #666; }
.fb.on { width: 28px; background: #e8e8e8; margin: 0 2px 0 3px; }
.fb.wide { justify-content: flex-start; }
.w-tt { width: 49px; padding-left: 8px; gap: 3px; }
.w-a { width: 46px; padding-left: 5px; gap: 3px; }
.w-a svg { width: 22px; height: 22px; }
.w-al { width: 46px; padding-left: 7px; gap: 3px; }
.w-al svg { width: 21px; height: 21px; }
.caret.dark { border-top-color: #555; }
.sep { width: 1px; height: 21px; flex: none; background: #eaeaea; }
.sep.s3 { margin: 0 1px 0 3px; }
.sep.s4 { margin: 0 2px; }
.font-pick { width: 107px; flex: none; display: flex; align-items: center; justify-content: space-between; padding: 0 9px 0 10px; font-family: "Liberation Sans", Arial, sans-serif; font-size: 14px; color: #444; }
.c-actions { height: 36px; flex: none; margin-top: 19px; display: flex; align-items: center; }
.send { width: 97px; height: 36px; flex: none; background: #1a73e8; border-radius: 4px; display: flex; color: #fff; font-size: 14px; margin-right: 6px; }
.send-main { width: 72px; display: flex; align-items: center; justify-content: center; font-family: "Liberation Sans", Arial, sans-serif; }
.send-more { flex: 1; border-left: 1px solid #1259b8; display: flex; align-items: center; justify-content: center; }
.caret.white { border-top-color: #fff; }
.ab { width: 32px; height: 28px; flex: none; display: flex; align-items: center; justify-content: center; border-radius: 4px; margin-bottom: 2px; }
.ab svg { width: 20px; height: 20px; fill: #6d6d6d; }
.ab svg.blk { fill: #111; }
.ab svg.outline { fill: none; stroke: #6d6d6d; stroke-width: 2; }
.ab.on { width: 28px; background: #e8e8e8; margin: 0 2px 2px; }
.ab-lock svg { width: 21px; height: 21px; }
.ab-more { width: 24px; }
.ab-trash { margin-right: -6px; }
.ab-trash svg { width: 22px; height: 22px; }

/* taskbar */
.taskbar { height: 40px; flex: none; background: #0a1118; display: flex; align-items: center; color: #fff; font-family: "Open Sans", "Noto Sans", sans-serif; }
.tb { width: 48px; height: 40px; flex: none; display: flex; align-items: center; justify-content: center; position: relative; }
.tb-edge { margin-left: 3px; }
.tb.run::after { content: ""; position: absolute; left: 4px; right: 4px; bottom: 0; height: 2px; background: #76b9ed; }
.tb.active { background: #3a3d42; margin-left: 2px; }
.tb.active::after { left: 0; right: 0; }
.t-win { width: 16px; height: 16px; fill: #fff; }
.t-line { width: 18px; height: 18px; fill: none; stroke: #fff; stroke-width: 1.200; }
.t-app { width: 24px; height: 24px; }
.tray { fill: none; stroke: #fff; stroke-width: 1; }
.tr-up { width: 12px; height: 7px; margin-right: 9px; }
.tr-net { width: 16px; height: 14px; margin-right: 7px; }
.tr-snd { width: 16px; height: 14px; margin-right: 10px; }
.tr-snd .dim { stroke: #666; }
.clock { width: 56px; margin-right: 16px; text-align: center; font-size: 11px; line-height: 17px; white-space: nowrap; display: flex; flex-direction: column; align-items: center; }
.tr-note { width: 17px; height: 16px; margin-right: 20px; }
.showdesk { width: 1px; height: 40px; background: #555; margin-right: 4px; }
```
